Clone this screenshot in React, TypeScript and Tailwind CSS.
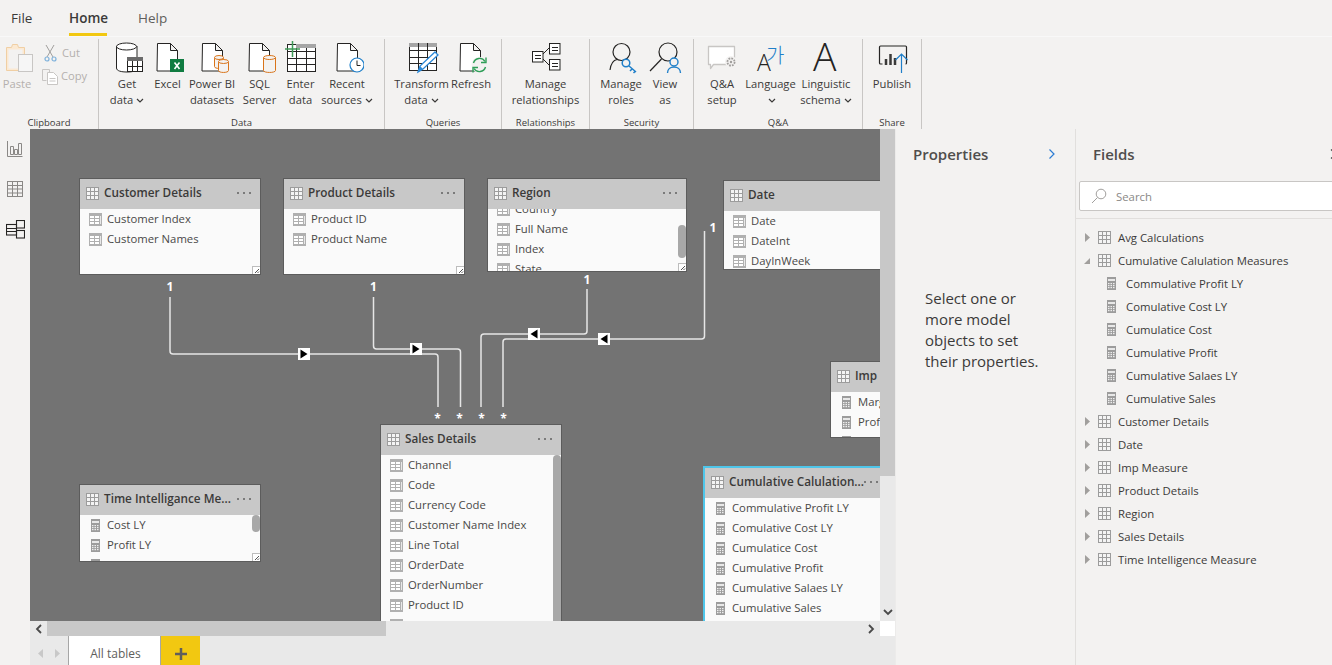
import React from "react";

const ink = "#252423";

const Doc = ({ x, y = 2 }: { x: number; y?: number }) => (
  <path d={`M${x + 0.5} ${y + 0.5}h13l7 7v20.5h-20.5zM${x + 13.5} ${y + 0.5}v7h7`} fill="#fff" stroke={ink} />
);
const Cyl = ({ x, y, w, h, c = "#d9741a" }: { x: number; y: number; w: number; h: number; c?: string }) => (
  <g fill="#f3f2f1" stroke={c}>
    <path d={`M${x + 0.5} ${y + 2.5}v${h - 4}c0 2.6 ${w - 1} 2.6 ${w - 1} 0v-${h - 4}`} />
    <ellipse cx={x + w / 2} cy={y + 2.5} rx={w / 2 - 0.5} ry={2} />
  </g>
);
const Ico = ({ children, w = 34 }: { children?: React.ReactNode; w?: number }) => (
  <svg width={w} height="34" viewBox={`0 0 ${w} 34`} className="block shrink-0">{children}</svg>
);
const Grid = ({ x, y, w, h, cols, rows, head = true }: { x: number; y: number; w: number; h: number; cols: number; rows: number; head?: boolean }) => {
  const lines: React.ReactNode[] = [];
  for (let i = 1; i < cols; i++) lines.push(<path key={"c" + i} d={`M${x + Math.round((w * i) / cols) + 0.5} ${y}v${h}`} />);
  for (let i = 1; i < rows; i++) lines.push(<path key={"r" + i} d={`M${x} ${y + Math.round((h * i) / rows) + 0.5}h${w}`} />);
  return (
    <g stroke={ink} fill="none">
      <rect x={x + 0.5} y={y + 0.5} width={w} height={h} fill="#fff" />
      {head && <rect x={x} y={y} width={w + 1} height={4} fill="#a6a6a6" stroke="none" />}
      {lines}
    </g>
  );
};

const icons: Record<string, React.ReactNode> = {
  get: (
    <Ico>
      <path d="M6.5 5v22c0 3 5 4 10.500 4s10-1 10-4V5" fill="#fff" stroke={ink} />
      <ellipse cx="16.500" cy="5.500" rx="10" ry="3.500" fill="#fff" stroke={ink} />
      <rect x="17.500" y="16.500" width="15" height="14" fill="#fff" stroke={ink} />
      <rect x="17" y="16" width="16" height="4" fill="#6a6a6a" />
      <path d="M17.500 25.500h15M22.500 20v11M27.500 20v11" stroke={ink} fill="none" />
    </Ico>
  ),
  excel: (
    <Ico>
      <Doc x={6} />
      <rect x="19" y="18" width="14" height="13" fill="#107c41" />
      <path d="M23.500 21.500l5 6.500M28.500 21.500l-5 6.500" stroke="#fff" strokeWidth="1.600" />
    </Ico>
  ),
  pbi: (
    <Ico>
      <Doc x={7} />
      <Cyl x={19} y={14} w={10} h={13} />
      <Cyl x={23} y={18} w={11} h={13} />
    </Ico>
  ),
  sql: (
    <Ico>
      <Doc x={6} />
      <Cyl x={20} y={14} w={13} h={17} />
    </Ico>
  ),
  enter: (
    <Ico>
      <Grid x={3} y={3} w={28} h={27} cols={3} rows={4} head={false} />
      <rect x="12" y="3" width="20" height="4" fill="#a6a6a6" />
      <path d="M8.500 0v16M1 8h15" stroke="#3f9b57" strokeWidth="1.500" />
    </Ico>
  ),
  recent: (
    <Ico>
      <Doc x={7} />
      <circle cx="27" cy="24" r="7" fill="#fff" stroke="#1f7fc9" strokeWidth="1.200" />
      <path d="M27 19.500v5h3.500" stroke={ink} fill="none" />
    </Ico>
  ),
  transform: (
    <Ico>
      <Grid x={4} y={2} w={27} h={27} cols={3} rows={4} />
      <path d="M13 31l2-6 15-14 3 3-15 14z" fill="#fff" stroke="#2b88d8" strokeWidth="1.300" />
      <path d="M13 31l2-6 3 3z" fill="#2b88d8" />
    </Ico>
  ),
  refresh: (
    <Ico>
      <Doc x={6} />
      <circle cx="25.500" cy="24" r="8" fill="#f3f2f1" />
      <path d="M19.500 22a6.300 6.300 0 0 1 11.500-1.500M31.500 26a6.300 6.300 0 0 1-11.500 1.500" stroke="#2f9e58" strokeWidth="1.400" fill="none" />
      <path d="M32 16.500v5h-5M19 31.500v-5h5" stroke="#2f9e58" strokeWidth="1.400" fill="none" />
    </Ico>
  ),
  rel: (
    <Ico>
      <path d="M14 13l6-6M14 18l6 6" stroke={ink} fill="none" />
      {[[3, 10], [20, 2], [20, 18]].map(([x, y]) => (
        <g key={x + "-" + y} stroke={ink} fill="#fff">
          <rect x={x + 0.5} y={y + 0.5} width="10.500" height="10.500" />
          <path d={`M${x + 3} ${y + 4.5}h6M${x + 3} ${y + 7.5}h6`} />
        </g>
      ))}
    </Ico>
  ),
  roles: (
    <Ico>
      <circle cx="17.500" cy="11" r="8.500" fill="none" stroke={ink} strokeWidth="1.200" />
      <path d="M6 29c1-7 4-10 7-10.500M22 19c1 .3 2 .8 3 1.500" stroke={ink} strokeWidth="1.200" fill="none" />
      <circle cx="22" cy="22" r="3.800" fill="#f3f2f1" stroke="#1f7fc9" strokeWidth="1.500" />
      <path d="M25 25l7 6M28 28l-2 2M31 30.500l-1.500 1.500" stroke="#1f7fc9" strokeWidth="1.500" fill="none" />
    </Ico>
  ),
  view: (
    <Ico>
      <circle cx="20" cy="11" r="9" fill="none" stroke={ink} strokeWidth="1.200" />
      <path d="M13.500 18L2 30" stroke={ink} strokeWidth="1.200" />
      <circle cx="26" cy="21" r="4" fill="#f3f2f1" stroke="#1f7fc9" strokeWidth="1.400" />
      <path d="M19.500 32c0-4 3-6 6.500-6s6.500 2 6.500 6" fill="none" stroke="#1f7fc9" strokeWidth="1.400" />
    </Ico>
  ),
  qa: (
    <Ico>
      <path d="M3.500 5.500h26v18h-21l-3 4v-4h-2z" fill="#fff" stroke="#c8c6c4" strokeWidth="1.300" strokeLinejoin="round" />
      <circle cx="26" cy="21" r="6" fill="#f3f2f1" />
      <circle cx="26" cy="21" r="3.600" fill="none" stroke="#a19f9d" strokeWidth="1.800" strokeDasharray="1.800 1" />
      <circle cx="26" cy="21" r="1.200" fill="#a19f9d" />
    </Ico>
  ),
  lang: (
    <Ico>
      <text x="3" y="30" fontFamily="'Open Sans'" fontWeight="300" fontSize="23" fill={ink}>A</text>
      <text x="12" y="22" fontFamily="'Noto Sans CJK KR'" fontWeight="300" fontSize="20" fill="#1f7fc9">가</text>
    </Ico>
  ),
  ling: (
    <Ico>
      <text x="4" y="30" fontFamily="'Open Sans'" fontWeight="300" fontSize="39" fill={ink}>A</text>
    </Ico>
  ),
  publish: (
    <Ico>
      <path d="M4.500 22v-16c0-.6.400-1 1-1h25c.6 0 1 .4 1 1v16c0 .6-.4 1-1 1" fill="none" stroke={ink} strokeWidth="1.200" />
      <path d="M4.500 22c0 .6.400 1 1 1h2" fill="none" stroke={ink} strokeWidth="1.200" />
      <path d="M11 24v-6M15.500 24v-11M20 24v-7" stroke="#3b3a39" strokeWidth="2.500" />
      <path d="M26.500 32V13M20.500 19l6-6 6 6" stroke="#1f7fc9" strokeWidth="1.200" fill="none" />
    </Ico>
  ),
};

const Chevron = ({ c = "#3b3a39" }: { c?: string }) => (
  <svg width="8" height="6" viewBox="0 0 8 6" className="inline-block ml-[3px]">
    <path d="M1 1l3 3 3-3" fill="none" stroke={c} strokeWidth="1.200" />
  </svg>
);

const Item = ({ w, icon, a, b, chev }: { w: number; icon: string; a: string; b?: string; chev?: boolean }) => (
  <div className="flex flex-col items-center shrink-0" style={{ width: w }}>
    {icons[icon]}
    <div className="mt-[1px] text-center leading-[16px] whitespace-nowrap text-[#3b3a39]">
      <div>{a}</div>
      <div className="h-[16px]">{b}{chev && <Chevron />}</div>
    </div>
  </div>
);

const Group = ({ w, label, pl = 0, children }: { w: number; label: string; pl?: number; children: React.ReactNode }) => (
  <div className="h-[90px] mt-[2px] flex flex-col shrink-0 border-r border-[#c8c6c4]" style={{ width: w }}>
    <div className="flex flex-1 pt-[2px]" style={{ paddingLeft: pl }}>{children}</div>
    <div className="text-center text-[9.500px] leading-[12px] text-[#3b3a39]">{label}</div>
  </div>
);

const Ribbon = () => (
  <div className="h-[92px] flex items-start text-[11.200px] shrink-0 bg-[#f3f2f1]">
    <Group w={99} label="Clipboard">
      <div className="w-[34px] flex flex-col items-center">
        <Ico>
          <path d="M6.500 6.500h5l1-3h5l1 3h6v23h-18z" fill="#fbe9d2" stroke="#f0cfa4" />
          <rect x="8.500" y="8.500" width="14" height="19" fill="#f3f2f1" />
          <rect x="18.500" y="13.500" width="14" height="17" fill="#f6f6f6" stroke="#c8c6c4" />
        </Ico>
        <div className="mt-[1px] leading-[16px] text-[#b3b0ad]">Paste</div>
      </div>
      <div className="ml-[7px] flex flex-col text-[#b3b0ad]">
        <div className="flex items-center h-[24px]">
          <svg width="14" height="18" viewBox="0 0 14 18" className="ml-[3px] mr-[3px]">
            <path d="M2 1l7 12M10 1L3 13" stroke="#a19f9d" fill="none" />
            <circle cx="3" cy="15" r="2" fill="none" stroke="#7fb2dc" strokeWidth="1.200" />
            <circle cx="10" cy="15" r="2" fill="none" stroke="#7fb2dc" strokeWidth="1.200" />
          </svg>
          <span className="ml-[1px]">Cut</span>
        </div>
        <div className="flex items-center h-[24px] -mt-[1px]">
          <svg width="18" height="17" viewBox="0 0 18 17" className="mr-[2px]">
            <path d="M1.500 1.500h7l0 3M1.500 1.500v11h4" fill="none" stroke="#c8c6c4" />
            <path d="M6.500 4.500h6l4 4v8h-10z" fill="#fff" stroke="#c8c6c4" />
            <path d="M8.500 10.500h6M8.500 13h6" stroke="#c8c6c4" />
          </svg>
          <span>Copy</span>
        </div>
      </div>
    </Group>
    <Group w={286} pl={8} label="Data">
      <Item w={40} icon="get" a="Get" b="data" chev />
      <Item w={41} icon="excel" a="Excel" />
      <Item w={48} icon="pbi" a="Power BI" b="datasets" />
      <Item w={47} icon="sql" a="SQL" b="Server" />
      <Item w={35} icon="enter" a="Enter" b="data" />
      <Item w={58} icon="recent" a="Recent" b="sources" chev />
    </Group>
    <Group w={117} pl={9} label="Queries">
      <Item w={55} icon="transform" a="Transform" b="data" chev />
      <Item w={44} icon="refresh" a="Refresh" />
    </Group>
    <Group w={88} label="Relationships">
      <div className="w-full flex justify-center"><Item w={70} icon="rel" a="Manage" b="relationships" /></div>
    </Group>
    <Group w={104} pl={9} label="Security">
      <Item w={44} icon="roles" a="Manage" b="roles" />
      <Item w={44} icon="view" a="View" b="as" />
    </Group>
    <Group w={169} pl={6} label="Q&A">
      <Item w={44} icon="qa" a="Q&A" b="setup" />
      <Item w={53} icon="lang" a="Language" chev />
      <Item w={58} icon="ling" a="Linguistic" b="schema" chev />
    </Group>
    <Group w={59} label="Share">
      <div className="w-full flex justify-center"><Item w={50} icon="publish" a="Publish" /></div>
    </Group>
  </div>
);

const TableIcon = () => (
  <svg width="13" height="13" viewBox="0 0 13 13" className="shrink-0 block">
    <rect width="13" height="13" fill="#9c9c9c" />
    {[1, 5, 9].map((x) => [1, 5, 9].map((y) => <rect key={x + "." + y} x={x} y={y} width="3" height="3" fill="#f4f4f4" />))}
  </svg>
);
const FieldIcon = () => (
  <svg width="13" height="13" viewBox="0 0 13 13" className="shrink-0">
    <rect width="13" height="13" fill="#b0b0b0" />
    {[1, 6].map((x) => [3, 6, 9].map((y) => <rect key={x + "." + y} x={x} y={y} width="4" height="2" fill="#fff" />))}
    <rect x="11" y="3" width="1" height="8" fill="#e8e8e8" />
  </svg>
);
const CalcIcon = () => (
  <svg width="13" height="13" viewBox="0 0 13 13" className="shrink-0">
    <rect x="2" width="9" height="13" fill="#9c9c9c" />
    <rect x="3" y="2" width="7" height="2" fill="#e8e8e8" />
    {[3, 5.500, 8].map((x) => [6, 8, 10].map((y) => <rect key={x + "." + y} x={x} y={y} width="1.500" height="1.200" fill="#eee" />))}
  </svg>
);

type CardP = {
  x: number; y: number; w: number; h: number; title: string; rows: string[]; calc?: boolean;
  offset?: number; dots?: boolean; grip?: boolean; thumb?: [number, number]; selected?: boolean;
};

const Card = ({ x, y, w, h, title, rows, calc, offset = 0, dots = true, grip = true, thumb, selected }: CardP) => (
  <div
    className={"absolute flex flex-col overflow-hidden bg-[#fafafa] " + (selected ? "border-t-2 border-l-2 border-[#4fc6ea]" : "border border-[#5c5c5c]")}
    style={{ left: x, top: y, width: w, height: h }}
  >
    <div className="h-[30px] shrink-0 bg-[#c8c8c8] flex items-center pl-[6px] pr-[9px] pb-[2px]">
      <TableIcon />
      <span className="ml-[5px] text-[11.750px] font-semibold text-[#3b3a39] whitespace-nowrap">{title}</span>
      {dots && (
        <span className="ml-auto flex gap-[4px]">
          <i className="w-[2px] h-[2px] bg-[#7a7a7a]" />
          <i className="w-[2px] h-[2px] bg-[#7a7a7a]" />
          <i className="w-[2px] h-[2px] bg-[#7a7a7a]" />
        </span>
      )}
    </div>
    <div className="flex-1 overflow-hidden relative">
      <div style={{ marginTop: offset }}>
        {rows.map((r) => (
          <div key={r} className="h-[20px] flex items-center pl-[9px] text-[11.300px] text-[#494847] whitespace-nowrap">
            {calc ? <CalcIcon /> : <FieldIcon />}
            <span className="ml-[5px]">{r}</span>
          </div>
        ))}
      </div>
      {thumb && (
        <div className="absolute right-0 w-[8px] rounded-[4px] bg-[#a8a8a8]" style={{ top: thumb[0], height: thumb[1] }} />
      )}
      {grip && (
        <div className="absolute right-0 bottom-0 w-[8px] h-[8px] bg-white border-l border-t border-[#bdbdbd]">
          <svg width="7" height="7" viewBox="0 0 7 7" className="block">
            <path d="M6 2L2 6M6 4.500L4.500 6" stroke="#555" />
          </svg>
        </div>
      )}
    </div>
  </div>
);

const Arrow = ({ x, y, left }: { x: number; y: number; left?: boolean }) => (
  <g>
    <rect x={x - 6} y={y - 6} width="12" height="12" fill="#fff" />
    <path d={left ? `M${x + 3.500} ${y - 4.500}v9l-7-4.500z` : `M${x - 3.500} ${y - 4.500}v9l7-4.500z`} fill="#000" />
  </g>
);

const Lines = () => (
  <svg width="850" height="492" viewBox="30 129 850 492" className="absolute left-0 top-0 pointer-events-none">
    <g fill="none" stroke="#e6e6e6" strokeWidth="1.500">
      <path d="M170 297v54q0 3 3 3h262q3 0 3 3v50" />
      <path d="M373.500 297v49q0 3 3 3h81q3 0 3 3v55" />
      <path d="M587 289v42q0 3-3 3H484q-3 0-3 3v70" />
      <path d="M704.500 231v105q0 3-3 3H506q-3 0-3 3v65" />
    </g>
    <Arrow x={304} y={354} />
    <Arrow x={416} y={349} />
    <Arrow x={534} y={334} left />
    <Arrow x={604} y={339} left />
  </svg>
);

const Mark = ({ x, y, t }: { x: number; y: number; t: string }) => (
  <span className="absolute -translate-x-1/2 -translate-y-1/2 text-[12px] font-bold text-white leading-none" style={{ left: x - 30, top: y - 129 }}>{t}</span>
);

const Canvas = () => (
  <div className="relative w-[850px] h-[492px] overflow-hidden bg-[#737373]">
    <Lines />
    <Card x={49} y={49} w={182} h={97} title="Customer Details" rows={["Customer Index", "Customer Names"]} />
    <Card x={253} y={49} w={182} h={97} title="Product Details" rows={["Product ID", "Product Name"]} />
    <Card x={457} y={49} w={200} h={94} title="Region" offset={-10} thumb={[16, 33]} rows={["Country", "Full Name", "Index", "State"]} />
    <Card x={693} y={51} w={182} h={90} title="Date" dots={false} grip={false} rows={["Date", "DateInt", "DayInWeek"]} />
    <Card x={800} y={232} w={182} h={77} title="Imp Measure" grip={false} calc rows={["Margin", "Profit", "Revenue"]} />
    <Card x={673} y={337} w={182} h={170} selected title="Cumulative Calulation..." calc grip={false}
      rows={["Commulative Profit LY", "Comulative Cost LY", "Cumulatice Cost", "Cumulative Profit", "Cumulative Salaes LY", "Cumulative Sales"]} />
    <Card x={49} y={355} w={182} h={78} title="Time Intelligance Me..." calc thumb={[0, 17]} rows={["Cost LY", "Profit LY", "Sales LY Percent"]} />
    <Card x={350} y={295} w={182} h={230} grip={false} title="Sales Details" thumb={[0, 170]}
      rows={["Channel", "Code", "Currency Code", "Customer Name Index", "Line Total", "OrderDate", "OrderNumber", "Product ID", "Quantity"]} />
    <Mark x={170} y={287} t="1" />
    <Mark x={373.5} y={287} t="1" />
    <Mark x={587} y={280} t="1" />
    <Mark x={713} y={228} t="1" />
    {[437.5, 459.5, 481.5, 503.5].map((x) => <Mark key={x} x={x} y={419} t="*" />)}
  </div>
);

const Chev = ({ dir, c = "#4a4a4a", s = 10 }: { dir: "l" | "r" | "d"; c?: string; s?: number }) => (
  <svg width={s} height={s} viewBox="0 0 10 10" className="shrink-0">
    <path d={dir === "l" ? "M7 1L3 5l4 4" : dir === "r" ? "M3 1l4 4-4 4" : "M1 3l4 4 4-4"} fill="none" stroke={c} strokeWidth="1.800" />
  </svg>
);

const Center = () => (
  <div className="w-[865px] shrink-0 flex flex-col">
    <div className="flex h-[492px]">
      <Canvas />
      <div className="w-[15px] bg-[#e9e9e9] flex flex-col">
        <div className="h-[347px] bg-[#c8c8c8]" />
        <div className="flex-1 flex items-end justify-center pb-[4px]"><Chev dir="d" /></div>
      </div>
    </div>
    <div className="flex h-[15px]">
      <div className="w-[850px] flex bg-[#e9e9e9]">
        <div className="w-[17px] flex items-center justify-center"><Chev dir="l" /></div>
        <div className="w-[339px] bg-[#c8c8c8]" />
        <div className="flex-1 flex items-center justify-end pr-[4px]"><Chev dir="r" /></div>
      </div>
      <div className="w-[15px] bg-white" />
    </div>
    <div className="flex h-[29px] bg-[#e9e9e9]">
      <div className="w-[39px] flex items-center justify-center gap-[10px] pt-[6px] border-r border-[#a6a6a6]">
        <svg width="6" height="9" viewBox="0 0 6 9"><path d="M5 0v9L0 4.500z" fill="#c8c8c8" /></svg>
        <svg width="6" height="9" viewBox="0 0 6 9"><path d="M1 0v9l5-4.500z" fill="#c8c8c8" /></svg>
      </div>
      <div className="w-[92px] bg-white border-r border-[#a6a6a6] flex items-center justify-center pt-[6px] pl-[2px] text-[12px] text-[#605e5c]">All tables</div>
      <div className="w-[39px] bg-[#f2c811] flex items-center justify-center pt-[6px]">
        <svg width="12" height="12" viewBox="0 0 12 12"><path d="M6 0v12M0 6h12" stroke="#605e5c" strokeWidth="2.500" /></svg>
      </div>
    </div>
  </div>
);

const Properties = () => (
  <div className="w-[180px] shrink-0 border-l border-[#ecebea] pl-[17px] pr-[20px]">
    <div className="flex items-center justify-between pt-[12px] h-[38px]">
      <span className="text-[15px] font-semibold text-[#504e4c]">Properties</span>
      <svg width="12" height="12" viewBox="0 0 12 12" className="-mr-[3px]"><path d="M3.500 1.500L8 6l-4.500 4.500" fill="none" stroke="#2b7cd3" strokeWidth="1.200" /></svg>
    </div>
    <p className="mt-[121px] ml-[12px] w-[125px] text-[15px] leading-[21px] text-[#3b3a39]">
      Select one or more model objects to set their properties.
    </p>
  </div>
);

const TreeRow = ({ name, open }: { name: string; open?: boolean }) => (
  <div className="h-[23px] flex items-center pl-[8px] text-[11.350px] text-[#3b3a39] whitespace-nowrap">
    <svg width="7" height="9" viewBox="0 0 7 9" className="shrink-0">
      {open ? <path d="M6 2v6H0z" fill="#a19f9d" /> : <path d="M1 0v9l5-4.500z" fill="#a19f9d" />}
    </svg>
    <span className="ml-[7px]"><TableIcon /></span>
    <span className="ml-[7px]">{name}</span>
  </div>
);
const ChildRow = ({ name }: { name: string }) => (
  <div className="h-[23px] flex items-center pl-[29px] text-[11.350px] text-[#3b3a39] whitespace-nowrap">
    <CalcIcon />
    <span className="ml-[8px]">{name}</span>
  </div>
);

const Fields = () => (
  <div className="flex-1 border-l border-[#e1dfdd] overflow-hidden">
    <div className="flex items-center pt-[12px] h-[38px] pl-[17px]">
      <span className="text-[15px] font-semibold text-[#504e4c]">Fields</span>
      <svg width="10" height="12" viewBox="0 0 10 12" className="ml-[194px] shrink-0"><path d="M2 1.500L7 6l-5 4.500" fill="none" stroke="#4a4a4a" strokeWidth="1.200" /></svg>
    </div>
    <div className="mt-[14px] ml-[3px] w-[270px] h-[30px] bg-white border border-[#c8c6c4] rounded-[2px] flex items-center pl-[11px] text-[11.350px] text-[#8a8886]">
      <svg width="16" height="16" viewBox="0 0 16 16" className="shrink-0"><circle cx="10" cy="6" r="4.800" fill="none" stroke="#a19f9d" /><path d="M6.500 9.500L1 15" stroke="#a19f9d" /></svg>
      <span className="ml-[9px] pt-[2px]">Search</span>
    </div>
    <div className="mt-[7px] h-[1px] bg-[#e1dfdd]" />
    <div className="pt-[7px]">
      <TreeRow name="Avg Calculations" />
      <TreeRow name="Cumulative Calulation Measures" open />
      {["Commulative Profit LY", "Comulative Cost LY", "Cumulatice Cost", "Cumulative Profit", "Cumulative Salaes LY", "Cumulative Sales"].map((n) => <ChildRow key={n} name={n} />)}
      {["Customer Details", "Date", "Imp Measure", "Product Details", "Region", "Sales Details", "Time Intelligence Measure"].map((n) => <TreeRow key={n} name={n} />)}
    </div>
  </div>
);

const Rail = () => (
  <div className="w-[30px] shrink-0 flex flex-col items-center pt-[12px] gap-[24px] bg-[#f3f2f1]">
    <svg width="16" height="16" viewBox="0 0 16 16" className="-ml-[1px]">
      <path d="M.5 0v15.500H15.500" fill="none" stroke="#8a8886" />
      <path d="M3.500 5.500h3v8h-3zM7.500 8.500h3v5h-3zM11.500 2.500h3v11h-3z" fill="none" stroke="#8a8886" />
    </svg>
    <svg width="16" height="16" viewBox="0 0 16 16" className="-ml-[1px]">
      <rect x=".5" y=".5" width="15" height="15" fill="none" stroke="#8a8886" />
      <path d="M.5 4.500h15M.5 8h15M.5 12h15M5.500 .5v15M10.500 .5v15" fill="none" stroke="#8a8886" />
    </svg>
    <svg width="19" height="19" viewBox="0 0 19 19" className="-mt-[1px]">
      <g fill="none" stroke="#252423" strokeWidth="1.100">
        <rect x=".5" y="4.500" width="10" height="10.500" />
        <path d="M.5 8.500h10M.5 11.500h10" />
        <rect x="10.500" y=".5" width="8" height="7.500" />
        <rect x="10.500" y="10.500" width="8" height="7.500" />
      </g>
    </svg>
  </div>
);

export default function App() {
  return (
    <div className="w-[1332px] h-[665px] overflow-hidden flex flex-col bg-[#f3f2f1] font-['Open_Sans','Liberation_Sans',sans-serif]">
      <div className="h-[37px] shrink-0 flex items-start text-[13.500px] text-[#3b3a39] border-b border-[#f8f8f8]">
        <span className="ml-[11px] w-[58px] leading-[37px]">File</span>
        <span className="w-[38px] text-center font-semibold h-[36px] leading-[36px] border-b-[3px] border-[#f2c811]">Home</span>
        <span className="ml-[31px] leading-[36px] text-[#605e5c]">Help</span>
      </div>
      <Ribbon />
      <div className="flex flex-1 min-h-0">
        <Rail />
        <Center />
        <Properties />
        <Fields />
      </div>
    </div>
  );
}
